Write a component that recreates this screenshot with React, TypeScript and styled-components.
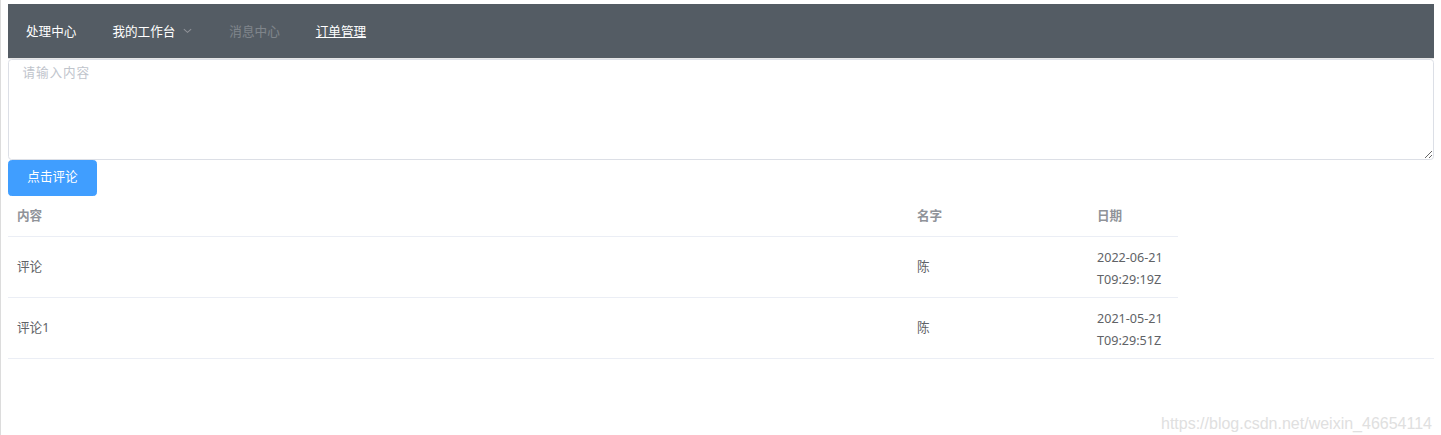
import React from "react";
import styled, { createGlobalStyle } from "styled-components";

const GlobalStyle = createGlobalStyle`
  html, body {
    margin: 0;
    padding: 0;
    background: #fff;
  }
  body {
    min-height: 100vh;
    box-sizing: border-box;
    border-left: 1px solid #dcdcdc;
    padding: 4px 7px 0 7px;
    font-family: "Noto Sans", "Noto Sans CJK SC", sans-serif;
    font-size: 12.6px;
    color: #606266;
  }
`;

const Page = styled.div`
  position: relative;
  min-height: 431px;
`;

const Menu = styled.ul`
  display: flex;
  align-items: center;
  margin: 0;
  padding: 0;
  list-style: none;
  height: 54px;
  background: #545c64;
  border-bottom: 1px solid #e6e6e6;
`;

const MenuItem = styled.li<{ $disabled?: boolean }>`
  display: flex;
  align-items: center;
  height: 54px;
  padding: 0 18px 2px;
  box-sizing: border-box;
  font-size: 12.6px;
  color: #fff;
  opacity: ${(p) => (p.$disabled ? 0.25 : 1)};
  cursor: pointer;
  white-space: nowrap;
`;

const MenuLink = styled.a`
  color: #fff;
  text-decoration: underline;
`;

const Arrow = styled.svg`
  margin-left: 7px;
  width: 11px;
  height: 11px;
`;

const Editor = styled.textarea`
  display: block;
  width: 100%;
  height: 101px;
  box-sizing: border-box;
  margin: 0;
  padding: 4px 13.5px;
  border: 1px solid #dcdfe6;
  border-radius: 3.6px;
  font-family: inherit;
  font-size: 12.6px;
  line-height: 1.5;
  letter-spacing: 0.9px;
  color: #606266;
  outline: none;
  &::placeholder {
    color: #c0c4cc;
  }
`;

const Button = styled.button`
  display: block;
  height: 36px;
  width: 89px;
  margin: 0;
  padding: 0 0 1px;
  border: 1px solid #409eff;
  border-radius: 3.6px;
  background: #409eff;
  color: #fff;
  font-family: inherit;
  font-size: 12.6px;
  line-height: 1;
  cursor: pointer;
`;

const Table = styled.div`
  width: 100%;
  border-bottom: 1px solid #ebeef5;
`;

const Row = styled.div<{ $last?: boolean }>`
  display: grid;
  grid-template-columns: 900px 180px 90px;
  width: 1170px;
  border-bottom: ${(p) => (p.$last ? "none" : "1px solid #ebeef5")};
`;

const HeadCell = styled.div`
  padding: 9px 9px 10px;
  line-height: 21px;
  font-weight: bold;
  color: #909399;
`;

const Cell = styled.div<{ $shift?: number }>`
  display: flex;
  flex-direction: column;
  justify-content: center;
  min-height: 60px;
  box-sizing: border-box;
  padding: ${(p) => 8 + (p.$shift || 0)}px 9px ${(p) => 8 - (p.$shift || 0)}px;
  line-height: 22px;
  color: #606266;
`;

const Watermark = styled.div`
  position: absolute;
  right: 2px;
  bottom: 2px;
  font-family: "Liberation Sans", Arial, sans-serif;
  font-size: 16px;
  color: #e0e0e0;
`;

const rows = [
  { content: "评论", name: "陈", date: "2022-06-21T09:29:19Z" },
  { content: "评论1", name: "陈", date: "2021-05-21T09:29:51Z" },
];

export default function App() {
  return (
    <Page>
      <GlobalStyle />
      <Menu>
        <MenuItem>处理中心</MenuItem>
        <MenuItem>
          我的工作台
          <Arrow viewBox="0 0 12 12">
            <polyline points="2,4.5 6,8 10,4.5" fill="none" stroke="#909399" strokeWidth="1.1" />
          </Arrow>
        </MenuItem>
        <MenuItem $disabled>消息中心</MenuItem>
        <MenuItem>
          <MenuLink>订单管理</MenuLink>
        </MenuItem>
      </Menu>
      <Editor placeholder="请输入内容" />
      <Button>点击评论</Button>
      <Table>
        <Row>
          <HeadCell>内容</HeadCell>
          <HeadCell>名字</HeadCell>
          <HeadCell>日期</HeadCell>
        </Row>
        {rows.map((r, i) => {
          const [day, time] = r.date.split("T");
          return (
            <Row key={i} $last={i === rows.length - 1}>
              <Cell>{r.content}</Cell>
              <Cell>{r.name}</Cell>
              <Cell $shift={2}>
                <span>{day}</span>
                <span>T{time}</span>
              </Cell>
            </Row>
          );
        })}
      </Table>
      <Watermark>https://blog.csdn.net/weixin_46654114</Watermark>
    </Page>
  );
}
